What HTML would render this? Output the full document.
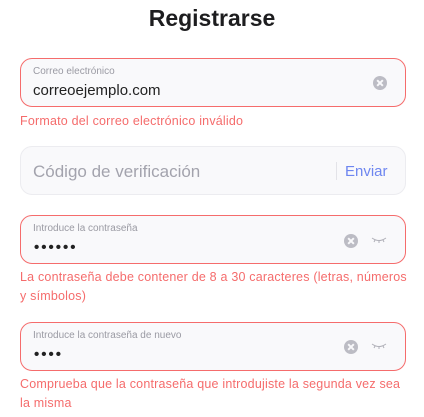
<!DOCTYPE html>
<html><head><meta charset="utf-8"><style>
*{margin:0;padding:0;box-sizing:border-box}
body{width:424px;height:417px;background:#fff;font-family:"Liberation Sans",sans-serif;position:relative;overflow:hidden}
.t{position:absolute;left:0;width:424px;text-align:center;top:5px;font-size:23px;font-weight:bold;color:#1d1d1f}
.box{position:absolute;left:20px;width:386px;height:49px;border-radius:12px;background:#f9f9fb;border:1px solid #f56c6c}
.lab{position:absolute;left:12px;top:7px;font-size:10px;color:#9a9aa3}
.val{position:absolute;left:12px;top:22px;font-size:15px;color:#222}
.dots{position:absolute;left:13px;top:23px;font-size:15px;letter-spacing:2px;color:#222;font-weight:bold}
.err{position:absolute;left:20px;font-size:12.5px;color:#f56c6c;line-height:19px;white-space:nowrap;letter-spacing:0.2px}
.x{position:absolute;width:14px;height:14px;border-radius:50%;background:#bcbcc4}
.x:before,.x:after{content:"";position:absolute;left:3px;top:6px;width:8px;height:2px;background:#f9f9fb;transform:rotate(45deg)}
.x:after{transform:rotate(-45deg)}
svg{position:absolute}
</style></head><body>
<div class="t">Registrarse</div>
<div class="box" style="top:58px"><div class="lab">Correo electrónico</div><div class="val" style="top:23px">correoejemplo.com</div><div class="x" style="left:352px;top:17px"></div></div>
<div class="err" style="top:112px">Formato del correo electrónico inválido</div>
<div class="box" style="top:146px;border-color:#ececf0"><div style="position:absolute;left:12px;top:15px;font-size:17px;color:#a3a3ad">Código de verificación</div><div style="position:absolute;left:315px;top:15px;width:1px;height:18px;background:#e3e3e8"></div><div style="position:absolute;left:324px;top:16px;font-size:15px;color:#6e86f0">Enviar</div></div>
<div class="box" style="top:215px"><div class="lab">Introduce la contraseña</div><div class="dots">••••••</div><div class="x" style="left:323px;top:18px"></div>
<svg style="left:350px;top:20px" width="16" height="8" viewBox="0 0 16 8"><path d="M1 2Q8 7 15 2M4 4L3 6M8 5V7M12 4L13 6" stroke="#b0b0b8" fill="none" stroke-width="1"/></svg></div>
<div class="err" style="top:268px">La contraseña debe contener de 8 a 30 caracteres (letras, números<br>y símbolos)</div>
<div class="box" style="top:322px"><div class="lab">Introduce la contraseña de nuevo</div><div class="dots">••••</div><div class="x" style="left:323px;top:17px"></div>
<svg style="left:350px;top:19px" width="16" height="8" viewBox="0 0 16 8"><path d="M1 2Q8 7 15 2M4 4L3 6M8 5V7M12 4L13 6" stroke="#b0b0b8" fill="none" stroke-width="1"/></svg></div>
<div class="err" style="top:375px">Comprueba que la contraseña que introdujiste la segunda vez sea<br>la misma</div>
</body></html>
